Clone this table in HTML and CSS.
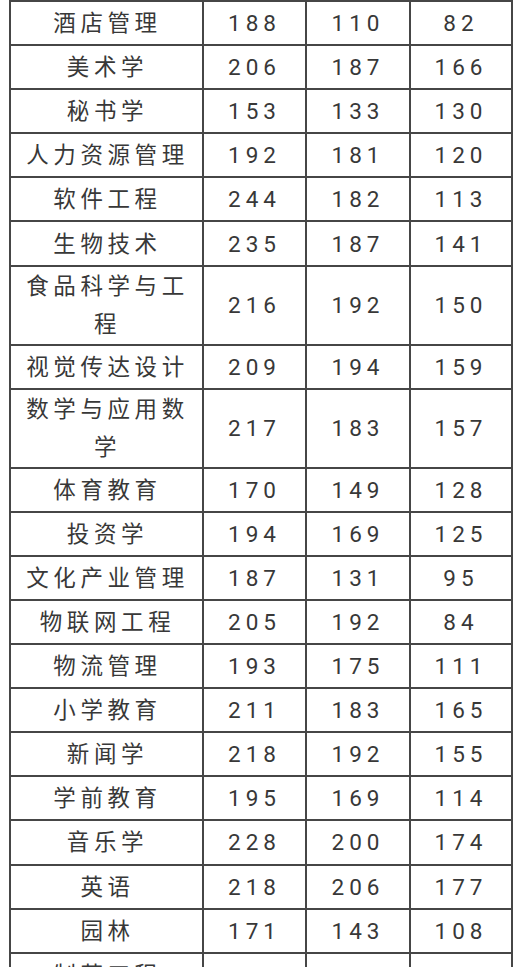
FILE: index.html
```html
<!DOCTYPE html>
<html lang="zh-CN">
<head>
<meta charset="utf-8">
<title>专业分数表</title>
<link rel="stylesheet" href="styles.css">
</head>
<body>
<div class="table">
  <div class="row"><div class="cell name">酒店管理</div><div class="cell">188</div><div class="cell">110</div><div class="cell">82</div></div>
  <div class="row"><div class="cell name">美术学</div><div class="cell">206</div><div class="cell">187</div><div class="cell">166</div></div>
  <div class="row"><div class="cell name">秘书学</div><div class="cell">153</div><div class="cell">133</div><div class="cell">130</div></div>
  <div class="row"><div class="cell name">人力资源管理</div><div class="cell">192</div><div class="cell">181</div><div class="cell">120</div></div>
  <div class="row"><div class="cell name">软件工程</div><div class="cell">244</div><div class="cell">182</div><div class="cell">113</div></div>
  <div class="row"><div class="cell name">生物技术</div><div class="cell">235</div><div class="cell">187</div><div class="cell">141</div></div>
  <div class="row"><div class="cell name two">食品科学与工程</div><div class="cell">216</div><div class="cell">192</div><div class="cell">150</div></div>
  <div class="row"><div class="cell name">视觉传达设计</div><div class="cell">209</div><div class="cell">194</div><div class="cell">159</div></div>
  <div class="row"><div class="cell name two">数学与应用数学</div><div class="cell">217</div><div class="cell">183</div><div class="cell">157</div></div>
  <div class="row"><div class="cell name">体育教育</div><div class="cell">170</div><div class="cell">149</div><div class="cell">128</div></div>
  <div class="row"><div class="cell name">投资学</div><div class="cell">194</div><div class="cell">169</div><div class="cell">125</div></div>
  <div class="row"><div class="cell name">文化产业管理</div><div class="cell">187</div><div class="cell">131</div><div class="cell">95</div></div>
  <div class="row"><div class="cell name">物联网工程</div><div class="cell">205</div><div class="cell">192</div><div class="cell">84</div></div>
  <div class="row"><div class="cell name">物流管理</div><div class="cell">193</div><div class="cell">175</div><div class="cell">111</div></div>
  <div class="row"><div class="cell name">小学教育</div><div class="cell">211</div><div class="cell">183</div><div class="cell">165</div></div>
  <div class="row"><div class="cell name">新闻学</div><div class="cell">218</div><div class="cell">192</div><div class="cell">155</div></div>
  <div class="row"><div class="cell name">学前教育</div><div class="cell">195</div><div class="cell">169</div><div class="cell">114</div></div>
  <div class="row"><div class="cell name">音乐学</div><div class="cell">228</div><div class="cell">200</div><div class="cell">174</div></div>
  <div class="row"><div class="cell name">英语</div><div class="cell">218</div><div class="cell">206</div><div class="cell">177</div></div>
  <div class="row"><div class="cell name">园林</div><div class="cell">171</div><div class="cell">143</div><div class="cell">108</div></div>
  <div class="row"><div class="cell name">制药工程</div><div class="cell">205</div><div class="cell">94</div><div class="cell">80</div></div>
</div>
</body>
</html>
```
FILE: styles.css
```css
html, body {
  margin: 0;
  padding: 0;
  background: #ffffff;
}

body {
  font-family: Roboto, "Noto Sans CJK SC", sans-serif;
  color: #383838;
  overflow: hidden;
}

.table {
  display: grid;
  grid-template-columns: 191px 101px 102px 100px;
  grid-auto-rows: minmax(42.1px, auto);
  gap: 2px;
  padding: 2px;
  margin: 0 0 0 9px;
  width: max-content;
  background: #464646;
}

.row {
  display: contents;
}

.cell {
  background: #ffffff;
  display: flex;
  align-items: center;
  justify-content: center;
  text-align: center;
  font-size: 22.5px;
  letter-spacing: 5px;
  line-height: 30px;
}

.name {
  padding: 0 6px 0 8px;
  letter-spacing: 4.6px;
}

.two {
  line-height: 38.5px;
}
```
